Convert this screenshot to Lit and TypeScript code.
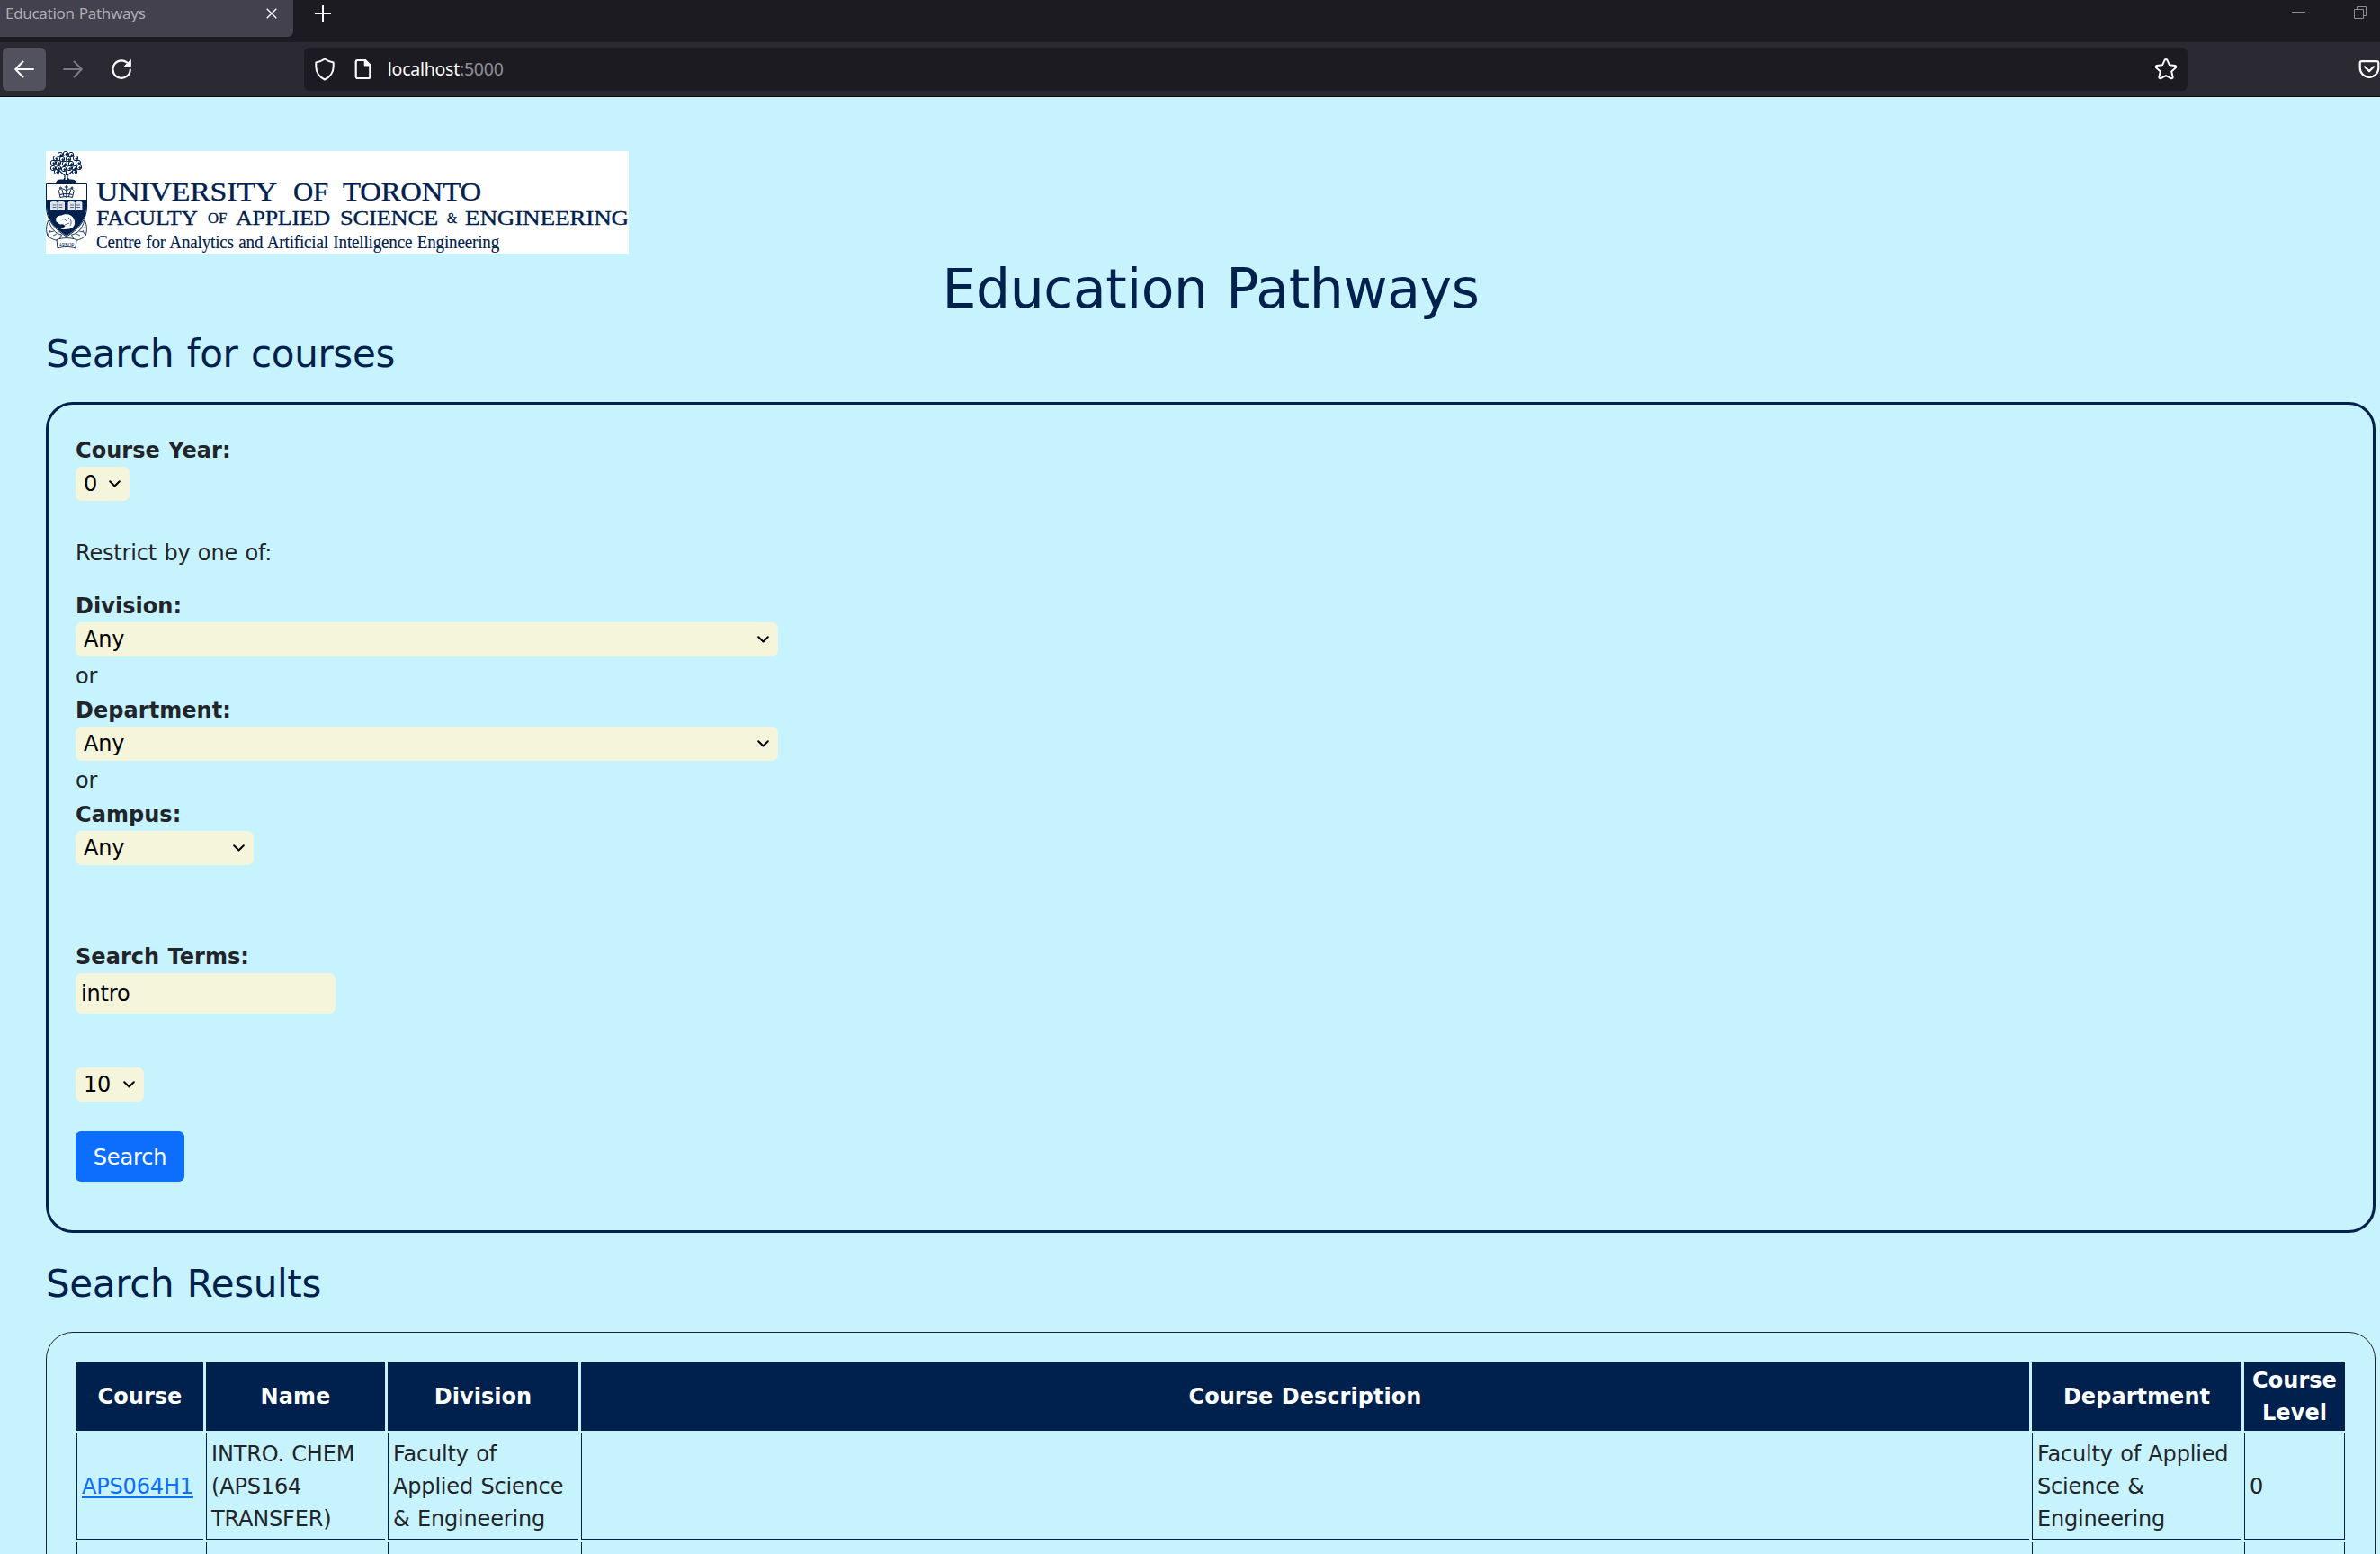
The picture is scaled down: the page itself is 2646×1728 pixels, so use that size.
import { LitElement, html, css, svg } from "lit";
import { customElement, property } from "lit/decorators.js";

const NAVY = "#00204e";

@customElement("browser-bar")
class BrowserBar extends LitElement {
  static styles = css`
    :host {
      display: block;
      height: 108px;
      box-sizing: border-box;
      background: #2b2a33;
      border-bottom: 1px solid #0c0c0d;
      font-family: "Noto Sans", "Open Sans", sans-serif;
      color: #fbfbfe;
    }
    svg {
      display: block;
      fill: none;
      stroke: currentColor;
      flex: none;
    }
    .tabs {
      height: 47px;
      background: #1c1b22;
      display: flex;
      align-items: flex-start;
    }
    .tab {
      width: 326px;
      height: 41px;
      box-sizing: border-box;
      padding: 0 18px 0 6px;
      background: #42414d;
      border-radius: 0 0 6px 0;
      display: flex;
      justify-content: space-between;
    }
    .title {
      font-size: 17px;
      line-height: 30px;
      letter-spacing: -0.3px;
      color: #aeadb3;
      white-space: nowrap;
    }
    .close {
      margin-top: 9px;
    }
    .plus {
      margin: 6px 0 0 24px;
    }
    .window {
      margin-left: auto;
      display: flex;
      gap: 54px;
      padding: 7px 15px 0 0;
      color: #8d8d91;
    }
    .tools {
      height: 60px;
      display: flex;
      align-items: center;
      padding-left: 3px;
    }
    .button {
      width: 48px;
      height: 48px;
      border-radius: 6px;
      display: flex;
      align-items: center;
      justify-content: center;
      margin-right: 6px;
    }
    .lit {
      background: #52525e;
    }
    .dim {
      color: #7b7a82;
    }
    .url {
      width: 2097px;
      height: 48px;
      box-sizing: border-box;
      margin-left: 173px;
      padding: 0 11px;
      border-radius: 6px;
      background: #1c1b22;
      display: flex;
      align-items: center;
    }
    .page {
      margin: 0 18px 0 21px;
    }
    .address {
      font-size: 19.5px;
      line-height: 48px;
      letter-spacing: -0.25px;
      white-space: nowrap;
    }
    .port {
      color: #8f8f95;
    }
    .star {
      margin-left: auto;
    }
    .pocket {
      margin-left: 190px;
    }
  `;
  render() {
    return html`
      <div class="tabs">
        <div class="tab">
          <span class="title">Education Pathways</span>
          <svg class="close" width="12" height="12" stroke-width="1.4" viewBox="0 0 12 12">
            <path d="M.7.7l10.6 10.6M11.3.7L.7 11.3" />
          </svg>
        </div>
        <svg class="plus" width="18" height="18" stroke-width="2" viewBox="0 0 18 18">
          <path d="M0 9h18M9 0v18" />
        </svg>
        <div class="window">
          <svg width="15" height="14" viewBox="0 0 15 14"><path d="M0 6.5h15" /></svg>
          <svg width="14" height="14" viewBox="0 0 14 14">
            <path d="M.5 3.5h10v10H.5zM3.5 3.5V.5h10v10h-3" />
          </svg>
        </div>
      </div>
      <div class="tools">
        <span class="button lit">
          <svg width="22" height="20" stroke-width="2" stroke-linecap="round" stroke-linejoin="round" viewBox="0 0 22 20">
            <path d="M21 10H1.5M9.5 1.5L1.2 10l8.3 8.5" />
          </svg>
        </span>
        <span class="button dim">
          <svg width="22" height="20" stroke-width="2" stroke-linecap="round" stroke-linejoin="round" viewBox="0 0 22 20">
            <path d="M1 10h19.5M12.500 1.500L20.800 10l-8.300 8.500" />
          </svg>
        </span>
        <span class="button">
          <svg width="24" height="24" stroke-width="2.200" stroke-linecap="round" viewBox="0 0 24 24">
            <path d="M21.800 12.600A9.700 9.700 0 1 1 18 4.400" />
            <path d="M22.300 2v6.600h-6.600z" fill="currentColor" stroke-width="1" stroke-linejoin="round" />
          </svg>
        </span>
        <div class="url">
          <svg width="24" height="26" stroke-width="2" stroke-linejoin="round" viewBox="0 0 24 26">
            <path d="M12 1.500c3.200 2.300 6.300 3.500 9.700 4v4.600c0 6-3.700 11.700-9.700 14.400C6 21.800 2.300 16.100 2.300 10.100V5.500C5.700 5 8.800 3.800 12 1.500z" />
          </svg>
          <svg class="page" width="19" height="24" stroke-width="2.200" stroke-linejoin="round" viewBox="0 0 19 24">
            <path d="M12 2H3.500A1.800 1.800 0 0 0 1.700 3.800v16.400A1.800 1.800 0 0 0 3.500 22h12a1.800 1.800 0 0 0 1.800-1.800V7.300z" />
            <path d="M11.800 2v5.500h5.500z" fill="currentColor" />
          </svg>
          <span class="address">localhost<span class="port">:5000</span></span>
          <svg class="star" width="26" height="26" stroke-width="2" stroke-linejoin="round" viewBox="0 0 26 26">
            <path d="M11.700 2.700a1.450 1.450 0 0 1 2.600 0l2.500 5.500 6.300.7a1.400 1.400 0 0 1 .8 2.400l-4.700 4.100 1.400 6.200a1.400 1.400 0 0 1-2.100 1.500L13 20l-5.500 3.100a1.400 1.400 0 0 1-2.100-1.500l1.400-6.200-4.700-4.100a1.400 1.400 0 0 1 .8-2.400l6.300-.7z" />
          </svg>
        </div>
        <svg class="pocket" width="24" height="22" stroke-width="2.200" stroke-linecap="round" stroke-linejoin="round" viewBox="0 0 24 22">
          <path d="M3.500 2.200h17a1.800 1.800 0 0 1 1.800 1.800v5.500a10.300 10.300 0 0 1-20.600 0V4a1.800 1.800 0 0 1 1.800-1.800z" />
          <path d="M7 8.300l5 4.800 5-4.800" />
        </svg>
      </div>
    `;
  }
}

@customElement("faculty-logo")
class FacultyLogo extends LitElement {
  static styles = css`
    :host {
      display: block;
      width: 648px;
      height: 114px;
      background: #fff;
    }
    svg {
      display: block;
    }
    text {
      font-family: "Liberation Serif", serif;
      fill: #00204e;
      stroke: #00204e;
      stroke-width: 0.35px;
    }
    .big {
      font-size: 29px;
    }
    .mid {
      font-size: 23.5px;
    }
    .small {
      font-size: 16px;
    }
    .unit {
      font-size: 20px;
      stroke-width: 0.15px;
    }
    .motto {
      font-size: 6px;
      stroke-width: 0;
    }
  `;

  private word(x: number, end: number, y: number, cls: string, label: string) {
    return svg`<text class=${cls} x=${x} y=${y} textLength=${end - x} lengthAdjust="spacingAndGlyphs">${label}</text>`;
  }

  render() {
    const leaves = [
      [22, 3], [16, 4], [28, 4], [11, 8], [18, 9], [25, 9], [33, 8], [8, 13], [14, 13], [21, 14],
      [28, 14], [36, 13], [8, 19], [14, 19], [20, 20], [26, 19], [32, 19], [37, 18], [12, 23], [32, 23],
    ];
    return html`<svg width="648" height="114" viewBox="0 0 648 114">
      <g fill="none" stroke=${NAVY} stroke-width="1">
        ${leaves.map(
          ([x, y]) => svg`<circle cx=${x} cy=${y} r="2.700" /><circle cx=${x + 0.8} cy=${y + 0.6} r=".9" fill=${NAVY} />`,
        )}
        <path d="M15 22l6 5v5M30 22l-6 5v5M22.500 22v5M19 33l2-3M27 33l-3-3" stroke-width="1.200" />
      </g>
      <path d="M11 35c1-3 4-4 7-3.500 3 .8 6 .8 9 0 3-.5 6 .5 7.500 3.500z" fill=${NAVY} />
      <path
        d="M.5 36.500h45V62c0 14-9 25-22.500 33C9.500 87 .5 76 .5 62z"
        fill="#fff" stroke=${NAVY} stroke-width="1"
      />
      <path d="M1 54h44v8c0 13.500-8.500 24-22 32C9.500 86 1 75.500 1 62z" fill=${NAVY} />
      <g fill="none" stroke=${NAVY} stroke-width="1">
        <path d="M16 51.500l-1.500-7c0-3 5-4 8.300 0 3.200-4 8.200-3 8.200 0l-1.500 7c-4-1.300-9.500-1.300-13.500 0z" />
        <path d="M22.800 38v14M18 43l2 7.500M27.500 43l-2 7.500M16 48.500c4-1.300 9.500-1.300 13.500 0M20.800 40h4" />
        <circle cx="16.500" cy="41" r="1" /><circle cx="29" cy="41" r="1" />
      </g>
      <g fill="#dfe4ec" stroke="#fff" stroke-width=".8">
        <path d="M5.500 57c2.500-1 5-1 7.500.5 2.500-1.500 5-1.500 7.500-.5v8.500c-2.500-1-5-1-7.500.3-2.500-1.300-5-1.300-7.500-.3z" />
        <path d="M25 57c2.500-1 5-1 7.500.5 2.500-1.500 5-1.500 7.500-.5v8.500c-2.500-1-5-1-7.500.3-2.500-1.300-5-1.300-7.500-.3z" />
      </g>
      <path
        d="M13 57.500v8M32.500 57.500v8M7.500 60h4M7.500 62.500h4M14.500 60h4M14.500 62.500h4M27 60h4M27 62.500h4M34 60h4M34 62.500h4"
        stroke=${NAVY} stroke-width=".6"
      />
      <path
        d="M11 75c1.500-3 4-3.500 6.500-3.500 3-1.500 7-2 10 0 3.500 2 5 5.500 4.500 9.500-.5 3-3 5-6 5.500-4 .5-8 1-9.500-.5 2-1 3.500-1 5-2.500-1.500-1.500-2-2.500-4.500-2-2.500.3-3-2-5.500-3z"
        fill="#fff"
      />
      <path d="M18 76c2-1 4 0 5 2M25 74c3 2 4 5 2 9M21 82l5-2" stroke=${NAVY} stroke-width=".7" fill="none" />
      <g fill="#fff" stroke=${NAVY} stroke-width=".9" stroke-linejoin="round">
        <path d="M3 77C0 82 0 89 2 94c4 4 8 5 12.500 5.500l3-6.500C11 92 6 87 3 77z" />
        <path d="M43 77c3 5 3 12 1 17-4 4-8 5-12.500 5.500l-3-6.500C35 92 40 87 43 77z" />
        <path d="M12 98.500c7-2.500 15-2.500 22 0l-1 9.500c-6.500-2-13.500-2-20 0z" />
      </g>
      <path
        d="M3 85l4 1M4 90l5-1M8 94l4-2M43 85l-4 1M42 90l-5-1M38 94l-4-2M2 94l3-6M44 94l-3-6"
        stroke=${NAVY} stroke-width=".8" fill="none"
      />
      ${this.word(14.5, 31.5, 105.5, "motto", "ARBOR")}
      ${this.word(56, 257, 55.3, "big", "UNIVERSITY")} ${this.word(275, 314, 55.3, "big", "OF")}
      ${this.word(330, 484, 55.3, "big", "TORONTO")} ${this.word(56, 169, 81.7, "mid", "FACULTY")}
      ${this.word(180, 201, 80, "small", "OF")} ${this.word(211, 316, 81.7, "mid", "APPLIED")}
      ${this.word(327, 436, 81.7, "mid", "SCIENCE")} ${this.word(446, 457, 80, "small", "&")}
      ${this.word(466, 648, 81.7, "mid", "ENGINEERING")}
      ${this.word(56, 504, 108, "unit", "Centre for Analytics and Artificial Intelligence Engineering")}
    </svg>`;
  }
}

@customElement("choice-box")
class ChoiceBox extends LitElement {
  @property() value = "";
  static styles = css`
    :host {
      display: flex;
      box-sizing: border-box;
      height: 38px;
      padding: 0 10px 0 9px;
      align-items: center;
      justify-content: space-between;
      border-radius: 7px;
      background: #f5f5dc;
      color: #000;
      font-size: 24px;
      line-height: 38px;
    }
    svg {
      display: block;
    }
  `;
  render() {
    return html`<span>${this.value}</span>
      <svg width="13" height="8" viewBox="0 0 13 8">
        <path d="M1.200 1.200l5.300 5.300 5.300-5.300" fill="none" stroke="#000" stroke-width="2" stroke-linecap="round" stroke-linejoin="round" />
      </svg>`;
  }
}

@customElement("app-root")
class AppRoot extends LitElement {
  static styles = css`
    :host {
      display: block;
      height: 1728px;
      overflow: hidden;
      background: #c7f3ff;
      color: #212529;
      font-family: "DejaVu Sans", sans-serif;
      font-size: 24px;
      line-height: 36px;
      letter-spacing: -0.17px;
      word-spacing: 0.9px;
    }
    .content {
      padding: 60px 5px 0 51px;
    }
    h1,
    h2 {
      margin: 0;
      font-weight: 400;
      color: #00204e;
    }
    h1 {
      padding-top: 3px;
      height: 81px;
      font-size: 60px;
      line-height: 72px;
      letter-spacing: -0.4px;
      word-spacing: 2px;
      text-align: center;
    }
    h2 {
      padding-top: 2px;
      height: 79px;
      font-size: 42px;
      line-height: 51px;
      letter-spacing: -0.35px;
      word-spacing: 1.6px;
    }
    .search {
      height: 924px;
      box-sizing: border-box;
      padding: 34px 30px 0;
      border: 3px solid #00204e;
      border-radius: 30px;
      display: flex;
      flex-direction: column;
      align-items: flex-start;
    }
    label {
      font-weight: 700;
      line-height: 35px;
      letter-spacing: 0.05px;
    }
    .note {
      margin: 40px 0 24px;
    }
    .or {
      margin: 4px 0 3px;
    }
    .year {
      width: 60px;
    }
    .wide {
      width: 781px;
    }
    .campus {
      width: 198px;
      margin-bottom: 85px;
    }
    .terms {
      width: 289px;
      height: 45px;
      box-sizing: border-box;
      margin: 0 0 60px;
      padding: 0 6px;
      border: 0;
      border-radius: 7px;
      background: #f5f5dc;
      color: #000;
      font: inherit;
      letter-spacing: inherit;
    }
    .count {
      width: 76px;
      margin-bottom: 33px;
    }
    button {
      width: 121px;
      height: 56px;
      padding: 1px 0 0;
      border: 0;
      border-radius: 6px;
      background: #0d6efd;
      color: #fff;
      font: inherit;
      letter-spacing: inherit;
    }
    .found {
      padding-top: 31px;
    }
    .results {
      height: 300px;
      border: 1px solid #212529;
      border-radius: 30px;
      padding: 33px;
    }
    .grid {
      display: grid;
      grid-template-columns: 141px 199px 212px 1610px 233px 112px;
      column-gap: 3px;
      row-gap: 3px;
      grid-template-rows: 76px 118px 118px;
    }
    .head {
      background: #00204e;
      color: #fff;
      font-weight: 700;
      letter-spacing: 0.05px;
      display: flex;
      align-items: center;
      justify-content: center;
      text-align: center;
    }
    .cell {
      border: solid #00204e;
      border-width: 0 0 1px 1px;
      padding: 1px 5px 0;
      display: flex;
      align-items: center;
    }
    .last {
      border-right-width: 1px;
    }
    a {
      color: #0d6efd;
      text-decoration: underline;
      text-underline-offset: 3px;
    }
  `;

  private heads = ["Course", "Name", "Division", "Course Description", "Department", "Course Level"];

  render() {
    return html`
      <browser-bar></browser-bar>
      <div class="content">
        <faculty-logo></faculty-logo>
        <h1>Education Pathways</h1>
        <h2>Search for courses</h2>
        <div class="search">
          <label>Course Year:</label>
          <choice-box class="year" value="0"></choice-box>
          <div class="note">Restrict by one of:</div>
          <label>Division:</label>
          <choice-box class="wide" value="Any"></choice-box>
          <div class="or">or</div>
          <label>Department:</label>
          <choice-box class="wide" value="Any"></choice-box>
          <div class="or">or</div>
          <label>Campus:</label>
          <choice-box class="campus" value="Any"></choice-box>
          <label>Search Terms:</label>
          <input class="terms" .value=${"intro"} />
          <choice-box class="count" value="10"></choice-box>
          <button>Search</button>
        </div>
        <h2 class="found">Search Results</h2>
        <div class="results">
          <div class="grid">
            ${this.heads.map((h) => html`<div class="head">${h}</div>`)}
            <div class="cell"><a>APS064H1</a></div>
            <div class="cell">INTRO. CHEM<br />(APS164<br />TRANSFER)</div>
            <div class="cell">Faculty of<br />Applied Science<br />&amp; Engineering</div>
            <div class="cell"></div>
            <div class="cell">Faculty of Applied<br />Science &amp;<br />Engineering</div>
            <div class="cell last">0</div>
            ${this.heads.map((_, i) => html`<div class="cell ${i === 5 ? "last" : ""}"></div>`)}
          </div>
        </div>
      </div>
    `;
  }
}
